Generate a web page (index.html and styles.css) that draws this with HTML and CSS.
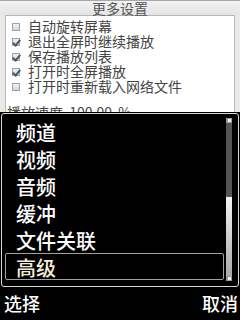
FILE: index.html
```html
<!DOCTYPE html>
<html lang="zh">
<head>
<meta charset="utf-8">
<link rel="stylesheet" href="styles.css">
</head>
<body>
<div class="screen">
  <div class="titlebar">更多设置</div>
  <div class="panel">
    <div class="row"><span class="cb"></span><span>自动旋转屏幕</span></div>
    <div class="row"><span class="cb checked"></span><span>退出全屏时继续播放</span></div>
    <div class="row"><span class="cb checked"></span><span>保存播放列表</span></div>
    <div class="row"><span class="cb checked"></span><span>打开时全屏播放</span></div>
    <div class="row"><span class="cb"></span><span>打开时重新载入网络文件</span></div>
    <div class="speed">播放速度&nbsp;&nbsp;100.00&nbsp;&nbsp;%</div>
  </div>

  <div class="popup">
    <div class="frame">
      <ul class="menu">
        <li class="item">频道</li>
        <li class="item">视频</li>
        <li class="item">音频</li>
        <li class="item">缓冲</li>
        <li class="item">文件关联</li>
        <li class="item selected">高级</li>
      </ul>
      <div class="scrollbar">
        <div class="cap"><span></span></div>
        <div class="track"><div class="thumb"></div></div>
        <div class="cap"><span></span></div>
      </div>
    </div>
    <div class="softkeys">
      <span>选择</span>
      <span>取消</span>
    </div>
  </div>
</div>
</body>
</html>
```
FILE: styles.css
```css
* { box-sizing: border-box; }
html, body {
  margin: 0;
  padding: 0;
  background: #e9e9e9;
}
.screen {
  position: relative;
  width: 240px;
  height: 320px;
  overflow: hidden;
  background: #e9e9e9;
  font-family: "Noto Sans CJK SC", "Noto Sans", sans-serif;
}
.titlebar {
  height: 15px;
  border-top: 1px solid #a8a8a8;
  background: linear-gradient(#f2f2f2, #e4e4e4);
  color: #555;
  font-size: 14px;
  line-height: 14px;
  text-align: center;
}
.panel {
  margin: 0 5px;
  height: 305px;
  background: #fff;
  border: 1px solid #b8b8b8;
  border-bottom: none;
  padding-top: 3px;
  color: #444;
  font-size: 14px;
}
.row {
  height: 15px;
  display: flex;
  align-items: center;
  line-height: 15px;
}
.cb {
  width: 8px;
  height: 8px;
  margin: 0 7px 0 6px;
  border: 1px solid #9aa4b0;
  background: linear-gradient(#eef2f6, #cdd6df);
  flex: none;
  position: relative;
}
.cb.checked::after {
  content: "";
  position: absolute;
  left: 1px;
  top: -1px;
  width: 3px;
  height: 6px;
  border-right: 2px solid #4a5866;
  border-bottom: 2px solid #4a5866;
  transform: rotate(40deg);
}
.row span:last-child {
  margin-left: 1px;
}
.speed {
  margin-top: 11px;
  padding-left: 1px;
  line-height: 15px;
  color: #444;
}
.popup {
  position: absolute;
  left: 0;
  top: 112px;
  width: 240px;
  height: 208px;
  background: #000;
  display: flex;
  flex-direction: column;
}
.frame {
  margin: 1px 1px 0 1px;
  height: 174px;
  border: 1px solid #d8d8d8;
  border-radius: 3px;
  display: flex;
  padding: 3px 6px 4px 3px;
}
.menu {
  list-style: none;
  margin: 0;
  padding: 1px 0 0 0;
  flex: 1;
}
.item {
  height: 27px;
  line-height: 27px;
  padding-left: 10px;
  color: #fff;
  font-size: 20px;
  font-weight: 500;
  margin-right: 2px;
  border: 1px solid transparent;
  border-radius: 2px;
}
.item.selected {
  border-color: #a0a0a0;
  color: #f4ecd8;
}
.scrollbar {
  width: 6px;
  display: flex;
  flex-direction: column;
  margin-top: 1px;
  margin-bottom: 1px;
}
.cap {
  height: 5px;
  background: #9a9a9a;
  display: flex;
  align-items: center;
  justify-content: center;
}
.cap span {
  width: 3px;
  height: 3px;
  background: #f0f0f0;
}
.track {
  flex: 1;
  background: #555;
  display: flex;
  flex-direction: column;
  justify-content: flex-end;
}
.thumb {
  height: 79px;
  background: linear-gradient(#f4f4f4, #a8a8a8);
}
.softkeys {
  flex: 1;
  display: flex;
  justify-content: space-between;
  align-items: center;
  padding: 0 2px 2px 4px;
  color: #fff;
  font-size: 18px;
  font-weight: 500;
}
```
